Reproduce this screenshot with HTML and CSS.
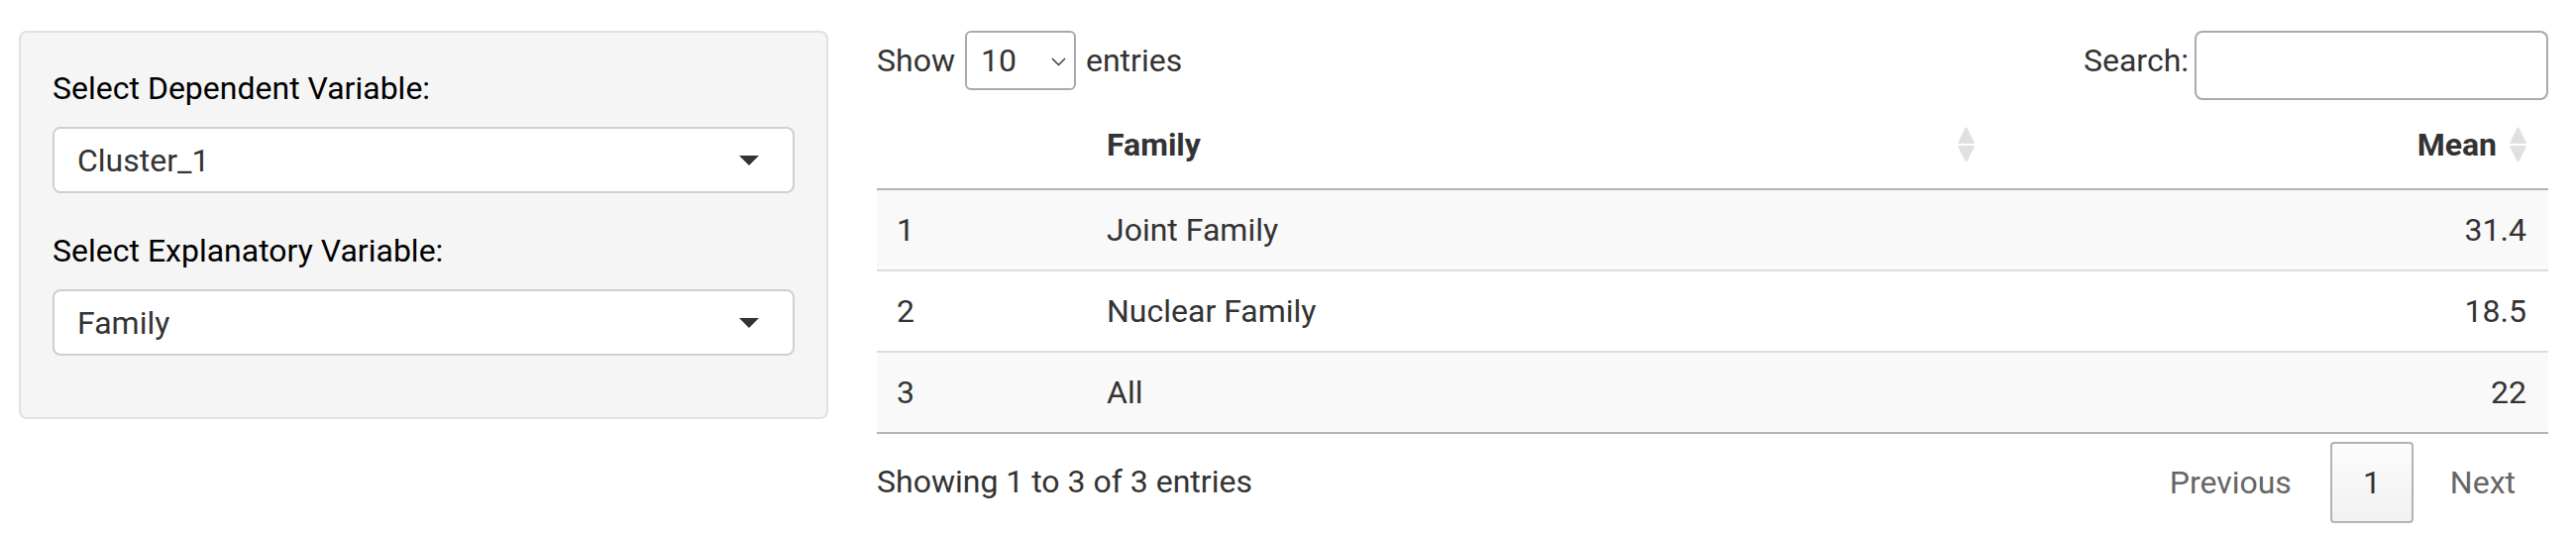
FILE: index.html
```html
<!DOCTYPE html>
<html lang="en">
<head>
<meta charset="utf-8">
<title>Cluster summary</title>
<link rel="stylesheet" href="styles.css">
</head>
<body>
<div class="page">
  <aside class="well">
    <div class="form-group">
      <label class="control-label">Select Dependent Variable:</label>
      <div class="selectize">
        <span class="sel-value">Cluster_1</span>
        <span class="caret"></span>
      </div>
    </div>
    <div class="form-group">
      <label class="control-label">Select Explanatory Variable:</label>
      <div class="selectize">
        <span class="sel-value">Family</span>
        <span class="caret"></span>
      </div>
    </div>
  </aside>

  <main class="dt-wrapper">
    <div class="dt-top">
      <div class="dt-length">
        <span>Show</span>
        <div class="len-select">
          <span>10</span>
          <svg class="chev" width="15" height="9" viewBox="0 0 15 9"><path d="M1 1 L7.5 7.5 L14 1" fill="none" stroke="#333" stroke-width="1.4"/></svg>
        </div>
        <span>entries</span>
      </div>
      <div class="dt-filter">
        <span class="filter-label">Search:</span>
        <input class="search-input" type="search" aria-label="Search">
      </div>
    </div>

    <table class="dt-table">
      <colgroup>
        <col class="c1"><col class="c2"><col class="c3">
      </colgroup>
      <thead>
        <tr>
          <th class="th-plain"></th>
          <th class="th-sort">
            <div class="th-inner">
              <span class="th-text">Family</span>
              <svg class="sort-icon" width="17" height="36" viewBox="0 0 17 36"><path d="M8.5 0.5 Q9.2 0.5 9.8 1.8 L16.6 15.4 Q17 17 15.4 17 L1.6 17 Q0 17 0.4 15.4 L7.2 1.8 Q7.8 0.5 8.5 0.5 Z" fill="#e0e0e0"/><path d="M1.6 19 L15.4 19 Q17 19 16.6 20.6 L9.8 34.2 Q8.5 36.3 7.2 34.2 L0.4 20.6 Q0 19 1.6 19 Z" fill="#e0e0e0"/></svg>
            </div>
          </th>
          <th class="th-sort th-right">
            <div class="th-inner">
              <span class="th-text">Mean</span>
              <svg class="sort-icon" width="17" height="36" viewBox="0 0 17 36"><path d="M8.5 0.5 Q9.2 0.5 9.8 1.8 L16.6 15.4 Q17 17 15.4 17 L1.6 17 Q0 17 0.4 15.4 L7.2 1.8 Q7.8 0.5 8.5 0.5 Z" fill="#e0e0e0"/><path d="M1.6 19 L15.4 19 Q17 19 16.6 20.6 L9.8 34.2 Q8.5 36.3 7.2 34.2 L0.4 20.6 Q0 19 1.6 19 Z" fill="#e0e0e0"/></svg>
            </div>
          </th>
        </tr>
      </thead>
      <tbody>
        <tr class="odd"><td>1</td><td>Joint Family</td><td class="num">31.4</td></tr>
        <tr class="even"><td>2</td><td>Nuclear Family</td><td class="num">18.5</td></tr>
        <tr class="odd"><td>3</td><td>All</td><td class="num">22</td></tr>
      </tbody>
    </table>

    <div class="dt-bottom">
      <div class="dt-info">Showing 1 to 3 of 3 entries</div>
      <div class="dt-paginate">
        <span class="pbtn disabled">Previous</span>
        <span class="pbtn current">1</span>
        <span class="pbtn disabled">Next</span>
      </div>
    </div>
  </main>
</div>
</body>
</html>
```

FILE: styles.css
```css
* {
  box-sizing: border-box;
}

html, body {
  margin: 0;
  padding: 0;
  background: #ffffff;
}

body {
  font-family: Roboto, "Noto Sans", "Liberation Sans", sans-serif;
  font-size: 32px;
  line-height: 48px;
  color: #333333;
}

.page {
  display: flex;
  align-items: flex-start;
  gap: 49px;
  padding: 0 28px 0 19px;
}

/* ---------- sidebar well ---------- */
.well {
  flex: 0 0 817px;
  margin-top: 31px;
  padding: 32px;
  background: #f5f5f5;
  border: 2px solid #e3e1da;
  border-radius: 8px;
}

.form-group {
  margin-bottom: 34px;
}

.form-group:last-child {
  margin-bottom: 30px;
}

.control-label {
  display: block;
  margin-bottom: 15px;
  color: #000000;
  font-weight: 400;
}

.selectize {
  display: flex;
  align-items: center;
  justify-content: space-between;
  height: 67px;
  padding: 0 34px 0 23px;
  background: #ffffff;
  border: 2px solid #cfcfcf;
  border-radius: 8px;
  color: #333333;
}

.caret {
  width: 0;
  height: 0;
  border-left: 10px solid transparent;
  border-right: 10px solid transparent;
  border-top: 10px solid #333333;
}

/* ---------- datatable wrapper ---------- */
.dt-wrapper {
  flex: 0 0 1687px;
  padding-top: 31px;
}

.dt-top {
  display: flex;
  justify-content: space-between;
  align-items: flex-start;
  height: 71px;
}

.dt-length {
  display: flex;
  align-items: center;
  gap: 10px;
  height: 60px;
}

.len-select {
  display: flex;
  align-items: center;
  justify-content: space-between;
  width: 112px;
  height: 60px;
  padding: 0 8px 0 14px;
  border: 2px solid #aaaaaa;
  border-radius: 6px;
  background: #ffffff;
}

.chev {
  display: block;
  margin-top: 2px;
}

.dt-filter {
  display: flex;
  align-items: flex-start;
}

.filter-label {
  padding-top: 6px;
}

.search-input {
  width: 357px;
  height: 70px;
  margin: 0 0 0 6px;
  border: 2px solid #aaaaaa;
  border-radius: 8px;
  background: #ffffff;
  font: inherit;
  padding: 0 10px;
}

/* ---------- table ---------- */
.dt-table {
  width: 100%;
  table-layout: fixed;
  border-collapse: separate;
  border-spacing: 0;
  border-bottom: 2px solid #b3b3b3;
}

.c1 { width: 212px; }
.c2 { width: 918px; }
.c3 { width: 557px; }

.dt-table th {
  padding: 20px 22px 20px 20px;
  text-align: left;
  font-weight: 700;
  color: #333333;
  border-bottom: 2px solid #b3b3b3;
}

.th-inner {
  display: flex;
  align-items: center;
  gap: 13px;
}

.th-text {
  flex: 1 1 auto;
}

.th-right .th-text {
  text-align: right;
}

.sort-icon {
  display: block;
  flex: 0 0 17px;
}

.dt-table td {
  padding: 16px 20px;
  border-top: 2px solid #dddddd;
  color: #333333;
}

.dt-table tbody tr:first-child td {
  border-top: none;
}

.dt-table tr.odd td {
  background: #f9f9f9;
}

.dt-table tr.even td {
  background: #ffffff;
}

.dt-table td.num {
  text-align: right;
  padding-right: 22px;
}

/* ---------- bottom ---------- */
.dt-bottom {
  display: flex;
  justify-content: space-between;
  align-items: flex-start;
}

.dt-info {
  padding-top: 24px;
}

.dt-paginate {
  display: flex;
  padding-top: 8px;
}

.pbtn {
  display: block;
  padding: 15px 31px;
  margin-left: 4px;
  border: 2px solid transparent;
  border-radius: 4px;
  line-height: 48px;
}

.pbtn.disabled {
  color: #666666;
}

.pbtn.disabled:first-child {
  margin-right: 2px;
}

.pbtn.current {
  color: #333333;
  border-color: #b3b3b3;
  background: linear-gradient(to bottom, #fcfcfc 0%, #f1f1f1 100%);
}
```
